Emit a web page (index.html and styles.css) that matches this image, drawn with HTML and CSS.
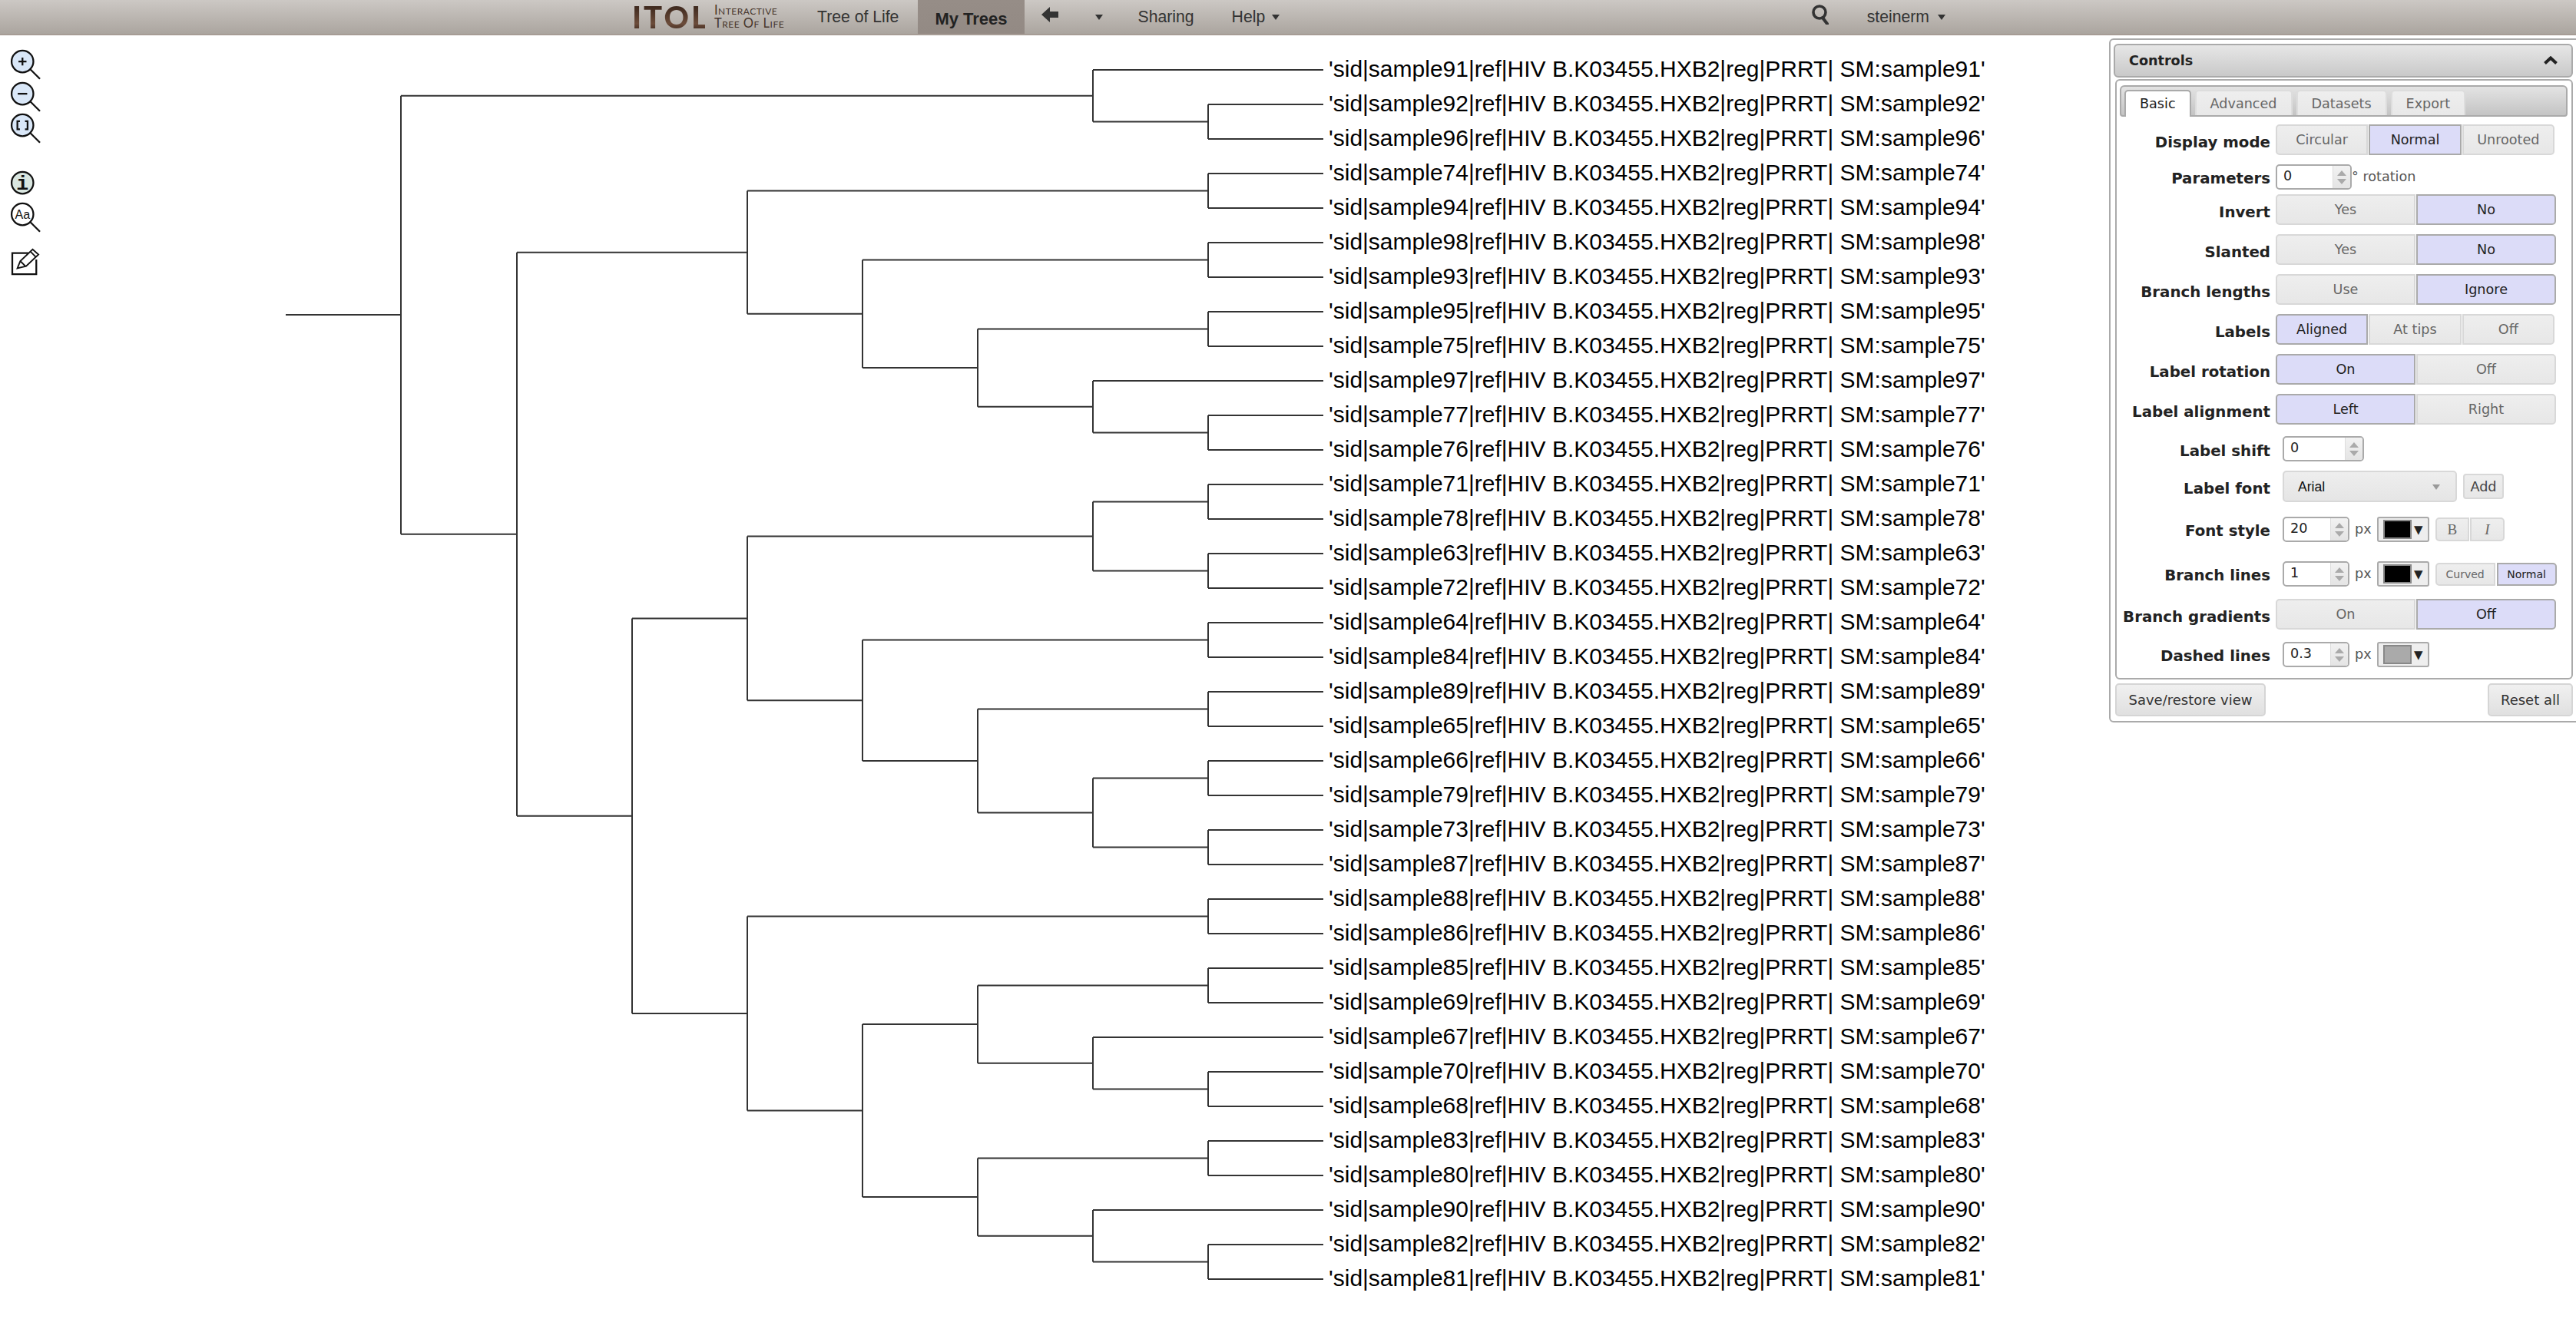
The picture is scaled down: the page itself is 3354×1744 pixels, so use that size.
FILE: index.html
```html
<!doctype html>
<html>
<head>
    <meta charset="UTF-8">
    <title>iTOL</title>
    <link rel="stylesheet" href="styles.css">
</head>
<body>
    <header class="topbar">
        <a class="logo">
            <span class="logo-mark">ITOL</span>
            <span class="logo-text">Interactive<br>Tree Of Life</span>
        </a>
        <a class="nav-item">Tree of Life</a>
        <a class="nav-item active">My Trees</a>
        <a class="nav-item nav-back">
            <svg width="22" height="20" viewBox="0 0 22 20"><path d="M0 10 L11 0 V6 H22 V14 H11 V20 Z" fill="#333"/></svg>
        </a>
        <a class="nav-item nav-drop"><span class="caret"></span></a>
        <a class="nav-item">Sharing</a>
        <a class="nav-item nav-help">Help <span class="caret"></span></a>
        <div class="nav-right">
            <svg class="nav-search" width="22" height="26" viewBox="0 0 22 26"><circle cx="10" cy="10" r="8" fill="none" stroke="#333" stroke-width="3.6"/><path d="M14 17 L20 25" stroke="#333" stroke-width="4" stroke-linecap="round"/></svg>
            <a class="nav-user">steinerm <span class="caret"></span></a>
        </div>
    </header>

    <div class="tools">
        <svg class="tool" viewBox="0 0 44 44"><circle class="lens" cx="17" cy="17" r="15"/><path class="ln" d="M27.500 27.500 L41 41"/><path class="ln" d="M11.500 17 H22.500 M17 11.500 V22.500"/></svg>
        <svg class="tool" viewBox="0 0 44 44"><circle class="lens" cx="17" cy="17" r="15"/><path class="ln" d="M27.500 27.500 L41 41"/><path class="ln" d="M10.500 17 H23.500"/></svg>
        <svg class="tool" viewBox="0 0 44 44"><circle class="lens" cx="17" cy="17" r="15"/><path class="ln" d="M27.500 27.500 L41 41"/><path class="ln" d="M13.500 11.500 H10 V22.500 H13.500 M20.500 11.500 H24 V22.500 H20.500"/></svg>
        <svg class="tool tool-gap" viewBox="0 0 44 44"><circle class="lens lens-info" cx="17" cy="17" r="15"/><text class="tool-i" x="17" y="26" text-anchor="middle">i</text></svg>
        <svg class="tool" viewBox="0 0 44 44"><circle class="lens lens-plain" cx="17" cy="17" r="15"/><path class="ln" d="M27.500 27.500 L41 41"/><text class="tool-aa" x="17" y="23" text-anchor="middle">Aa</text></svg>
        <svg class="tool tool-edit" viewBox="0 0 44 44"><path class="ln" d="M25 8 H3 V37 H36 V17"/><path class="ln thin" d="M10 29 L14 19 L31 3 L39 10 L22 26 Z M14 19 L21 26 M28 6 L35 13"/></svg>
    </div>

    <svg class="tree" width="2740" height="1698" viewBox="0 46 2740 1698">
        <path class="branches" d="
            M372 410 H522 M522 124.750 V695.700
            M522 124.750 H1423 M1423 91 V158.500 M1423 91 H1723
            M1423 158.500 H1573 M1573 136 V181 M1573 136 H1723 M1573 181 H1723
            M522 695.700 H673 M673 328.650 V1062.700
            M673 328.650 H973 M973 248.500 V408.800
            M973 248.500 H1573 M1573 226 V271 M1573 226 H1723 M1573 271 H1723
            M973 408.800 H1123 M1123 338.500 V479.100
            M1123 338.500 H1573 M1573 316 V361 M1573 316 H1723 M1573 361 H1723
            M1123 479.100 H1273 M1273 428.500 V529.750
            M1273 428.500 H1573 M1573 406 V451 M1573 406 H1723 M1573 451 H1723
            M1273 529.750 H1423 M1423 496 V563.500 M1423 496 H1723
            M1423 563.500 H1573 M1573 541 V586 M1573 541 H1723 M1573 586 H1723
            M673 1062.700 H823 M823 805.400 V1320
            M823 805.400 H973 M973 698.500 V912.250
            M973 698.500 H1423 M1423 653.500 V743.500
            M1423 653.500 H1573 M1573 631 V676 M1573 631 H1723 M1573 676 H1723
            M1423 743.500 H1573 M1573 721 V766 M1573 721 H1723 M1573 766 H1723
            M973 912.250 H1123 M1123 833.500 V991
            M1123 833.500 H1573 M1573 811 V856 M1573 811 H1723 M1573 856 H1723
            M1123 991 H1273 M1273 923.500 V1058.500
            M1273 923.500 H1573 M1573 901 V946 M1573 901 H1723 M1573 946 H1723
            M1273 1058.500 H1423 M1423 1013.500 V1103.500
            M1423 1013.500 H1573 M1573 991 V1036 M1573 991 H1723 M1573 1036 H1723
            M1423 1103.500 H1573 M1573 1081 V1126 M1573 1081 H1723 M1573 1126 H1723
            M823 1320 H973 M973 1193.500 V1446.600
            M973 1193.500 H1573 M1573 1171 V1216 M1573 1171 H1723 M1573 1216 H1723
            M973 1446.600 H1123 M1123 1334.100 V1559.100
            M1123 1334.100 H1273 M1273 1283.500 V1384.750
            M1273 1283.500 H1573 M1573 1261 V1306 M1573 1261 H1723 M1573 1306 H1723
            M1273 1384.750 H1423 M1423 1351 V1418.500 M1423 1351 H1723
            M1423 1418.500 H1573 M1573 1396 V1441 M1573 1396 H1723 M1573 1441 H1723
            M1123 1559.100 H1273 M1273 1508.500 V1609.750
            M1273 1508.500 H1573 M1573 1486 V1531 M1573 1486 H1723 M1573 1531 H1723
            M1273 1609.750 H1423 M1423 1576 V1643.500 M1423 1576 H1723
            M1423 1643.500 H1573 M1573 1621 V1666 M1573 1621 H1723 M1573 1666 H1723"/>
        <g class="leaves">
            <text x="1730" y="100">'sid|sample91|ref|HIV B.K03455.HXB2|reg|PRRT| SM:sample91'</text>
            <text x="1730" y="145">'sid|sample92|ref|HIV B.K03455.HXB2|reg|PRRT| SM:sample92'</text>
            <text x="1730" y="190">'sid|sample96|ref|HIV B.K03455.HXB2|reg|PRRT| SM:sample96'</text>
            <text x="1730" y="235">'sid|sample74|ref|HIV B.K03455.HXB2|reg|PRRT| SM:sample74'</text>
            <text x="1730" y="280">'sid|sample94|ref|HIV B.K03455.HXB2|reg|PRRT| SM:sample94'</text>
            <text x="1730" y="325">'sid|sample98|ref|HIV B.K03455.HXB2|reg|PRRT| SM:sample98'</text>
            <text x="1730" y="370">'sid|sample93|ref|HIV B.K03455.HXB2|reg|PRRT| SM:sample93'</text>
            <text x="1730" y="415">'sid|sample95|ref|HIV B.K03455.HXB2|reg|PRRT| SM:sample95'</text>
            <text x="1730" y="460">'sid|sample75|ref|HIV B.K03455.HXB2|reg|PRRT| SM:sample75'</text>
            <text x="1730" y="505">'sid|sample97|ref|HIV B.K03455.HXB2|reg|PRRT| SM:sample97'</text>
            <text x="1730" y="550">'sid|sample77|ref|HIV B.K03455.HXB2|reg|PRRT| SM:sample77'</text>
            <text x="1730" y="595">'sid|sample76|ref|HIV B.K03455.HXB2|reg|PRRT| SM:sample76'</text>
            <text x="1730" y="640">'sid|sample71|ref|HIV B.K03455.HXB2|reg|PRRT| SM:sample71'</text>
            <text x="1730" y="685">'sid|sample78|ref|HIV B.K03455.HXB2|reg|PRRT| SM:sample78'</text>
            <text x="1730" y="730">'sid|sample63|ref|HIV B.K03455.HXB2|reg|PRRT| SM:sample63'</text>
            <text x="1730" y="775">'sid|sample72|ref|HIV B.K03455.HXB2|reg|PRRT| SM:sample72'</text>
            <text x="1730" y="820">'sid|sample64|ref|HIV B.K03455.HXB2|reg|PRRT| SM:sample64'</text>
            <text x="1730" y="865">'sid|sample84|ref|HIV B.K03455.HXB2|reg|PRRT| SM:sample84'</text>
            <text x="1730" y="910">'sid|sample89|ref|HIV B.K03455.HXB2|reg|PRRT| SM:sample89'</text>
            <text x="1730" y="955">'sid|sample65|ref|HIV B.K03455.HXB2|reg|PRRT| SM:sample65'</text>
            <text x="1730" y="1000">'sid|sample66|ref|HIV B.K03455.HXB2|reg|PRRT| SM:sample66'</text>
            <text x="1730" y="1045">'sid|sample79|ref|HIV B.K03455.HXB2|reg|PRRT| SM:sample79'</text>
            <text x="1730" y="1090">'sid|sample73|ref|HIV B.K03455.HXB2|reg|PRRT| SM:sample73'</text>
            <text x="1730" y="1135">'sid|sample87|ref|HIV B.K03455.HXB2|reg|PRRT| SM:sample87'</text>
            <text x="1730" y="1180">'sid|sample88|ref|HIV B.K03455.HXB2|reg|PRRT| SM:sample88'</text>
            <text x="1730" y="1225">'sid|sample86|ref|HIV B.K03455.HXB2|reg|PRRT| SM:sample86'</text>
            <text x="1730" y="1270">'sid|sample85|ref|HIV B.K03455.HXB2|reg|PRRT| SM:sample85'</text>
            <text x="1730" y="1315">'sid|sample69|ref|HIV B.K03455.HXB2|reg|PRRT| SM:sample69'</text>
            <text x="1730" y="1360">'sid|sample67|ref|HIV B.K03455.HXB2|reg|PRRT| SM:sample67'</text>
            <text x="1730" y="1405">'sid|sample70|ref|HIV B.K03455.HXB2|reg|PRRT| SM:sample70'</text>
            <text x="1730" y="1450">'sid|sample68|ref|HIV B.K03455.HXB2|reg|PRRT| SM:sample68'</text>
            <text x="1730" y="1495">'sid|sample83|ref|HIV B.K03455.HXB2|reg|PRRT| SM:sample83'</text>
            <text x="1730" y="1540">'sid|sample80|ref|HIV B.K03455.HXB2|reg|PRRT| SM:sample80'</text>
            <text x="1730" y="1585">'sid|sample90|ref|HIV B.K03455.HXB2|reg|PRRT| SM:sample90'</text>
            <text x="1730" y="1630">'sid|sample82|ref|HIV B.K03455.HXB2|reg|PRRT| SM:sample82'</text>
            <text x="1730" y="1675">'sid|sample81|ref|HIV B.K03455.HXB2|reg|PRRT| SM:sample81'</text>
        </g>
    </svg>

    <aside class="controls">
        <div class="controls-head">
            <span>Controls</span>
            <svg width="18" height="12" viewBox="0 0 18 12"><path d="M1.500 9.500 L9 2.500 L16.500 9.500" fill="none" stroke="#222" stroke-width="4"/></svg>
        </div>
        <div class="controls-body">
            <div class="tabs">
                <span class="tab current">Basic</span>
                <span class="tab">Advanced</span>
                <span class="tab">Datasets</span>
                <span class="tab">Export</span>
            </div>

            <div class="row">
                <label>Display mode</label>
                <div class="seg seg-3"><span class="btn">Circular</span><span class="btn on">Normal</span><span class="btn">Unrooted</span></div>
            </div>
            <div class="row">
                <label class="label-up">Parameters</label>
                <div class="spin spin-first"><span class="val">0</span><span class="arrows"></span></div>
                <span class="unit unit-rot">° rotation</span>
            </div>
            <div class="row gap-6">
                <label>Invert</label>
                <div class="seg"><span class="btn">Yes</span><span class="btn on">No</span></div>
            </div>
            <div class="row">
                <label>Slanted</label>
                <div class="seg"><span class="btn">Yes</span><span class="btn on">No</span></div>
            </div>
            <div class="row">
                <label>Branch lengths</label>
                <div class="seg"><span class="btn">Use</span><span class="btn on">Ignore</span></div>
            </div>
            <div class="row">
                <label>Labels</label>
                <div class="seg seg-3"><span class="btn on">Aligned</span><span class="btn">At tips</span><span class="btn">Off</span></div>
            </div>
            <div class="row">
                <label>Label rotation</label>
                <div class="seg"><span class="btn on">On</span><span class="btn">Off</span></div>
            </div>
            <div class="row">
                <label>Label alignment</label>
                <div class="seg"><span class="btn on">Left</span><span class="btn">Right</span></div>
            </div>
            <div class="row gap-15">
                <label>Label shift</label>
                <div class="spin spin-wide"><span class="val">0</span><span class="arrows"></span></div>
            </div>
            <div class="row">
                <label>Label font</label>
                <div class="select"><span>Arial</span><span class="caret caret-grey"></span></div>
                <span class="btn btn-add">Add</span>
            </div>
            <div class="row gap-19">
                <label class="label-up">Font style</label>
                <div class="spin"><span class="val">20</span><span class="arrows"></span></div>
                <span class="unit">px</span>
                <div class="color"><span class="swatch"></span><span class="tri">▼</span></div>
                <div class="seg seg-mini"><span class="btn btn-serif">B</span><span class="btn btn-serif italic">I</span></div>
            </div>
            <div class="row gap-25">
                <label class="label-up">Branch lines</label>
                <div class="spin"><span class="val">1</span><span class="arrows"></span></div>
                <span class="unit">px</span>
                <div class="color"><span class="swatch"></span><span class="tri">▼</span></div>
                <div class="seg seg-small"><span class="btn">Curved</span><span class="btn on">Normal</span></div>
            </div>
            <div class="row gap-16">
                <label>Branch gradients</label>
                <div class="seg"><span class="btn">On</span><span class="btn on">Off</span></div>
            </div>
            <div class="row gap-16 row-last">
                <label class="label-up">Dashed lines</label>
                <div class="spin"><span class="val">0.3</span><span class="arrows"></span></div>
                <span class="unit">px</span>
                <div class="color"><span class="swatch swatch-grey"></span><span class="tri">▼</span></div>
            </div>
        </div>
        <div class="controls-foot">
            <span class="foot-btn foot-save">Save/restore view</span>
            <span class="foot-btn foot-reset">Reset all</span>
        </div>
    </aside>
</body>
</html>
```

FILE: styles.css
```css
* {
    box-sizing: border-box;
}
body {
    margin: 0;
    width: 3354px;
    height: 1744px;
    overflow: hidden;
    position: relative;
    background-color: #fff;
    font-family: "Liberation Sans", Arial, sans-serif;
}

/* top bar */
.topbar {
    height: 46px;
    padding: 0 821px 0 823px;
    display: flex;
    align-items: center;
    background: linear-gradient(#ccc8c4, #aba59f);
    border-bottom: 2px solid #a69c95;
    color: #333;
    font-size: 21.200px;
}
.logo {
    width: 219px;
    display: flex;
    align-items: center;
    gap: 12px;
}
.logo-mark {
    width: 95px;
    font-family: "Lato", sans-serif;
    font-weight: 900;
    font-size: 40px;
    line-height: 44px;
    letter-spacing: 3px;
    background: linear-gradient(#2d1c14, #6c4c3a 70%, #2d1c14);
    -webkit-background-clip: text;
    background-clip: text;
    color: transparent;
}
.logo-text {
    font-family: "Lato", sans-serif;
    font-variant: small-caps;
    font-size: 16.500px;
    line-height: 17px;
    letter-spacing: 0.5px;
    color: #47362c;
    white-space: nowrap;
}
.nav-item {
    height: 44px;
    padding: 0 22px;
    display: flex;
    align-items: center;
    white-space: nowrap;
}
.nav-item.active {
    margin-left: 3px;
    padding-top: 5px;
    background: linear-gradient(#968d87, #938a84);
    font-size: 22px;
    font-weight: bold;
    color: #222;
}
.nav-drop {
    padding: 0 24px 0 26px;
}
.nav-back svg {
    margin-bottom: 6px;
}
.nav-help {
    margin-left: 5px;
    gap: 9px;
}
.caret {
    display: inline-block;
    border-top: 7px solid #333;
    border-left: 5.500px solid transparent;
    border-right: 5.500px solid transparent;
}
.nav-right {
    margin-left: auto;
    display: flex;
    align-items: center;
    gap: 50px;
}
.nav-search {
    margin-bottom: 6px;
}
.nav-user {
    display: flex;
    align-items: center;
    gap: 11px;
}

/* zoom and label tools over the canvas */
.tools {
    position: absolute;
    left: 12px;
    top: 64px;
    display: flex;
    flex-direction: column;
}
.tool {
    width: 44px;
    height: 41.670px;
    overflow: visible;
}
.tool-gap {
    margin-top: 32.600px;
}
.tool-edit {
    margin-top: 17px;
}
.lens {
    fill: #d9e7f8;
    stroke: #111;
    stroke-width: 2.400;
}
.lens-info {
    fill: #d9e6e0;
}
.lens-plain {
    fill: #fff;
}
.ln {
    fill: none;
    stroke: #111;
    stroke-width: 2.400;
}
.thin {
    stroke-width: 2;
}
.tool-i {
    font-family: "Liberation Mono", monospace;
    font-weight: bold;
    font-size: 28px;
    fill: #111;
}
.tool-aa {
    font-size: 17px;
    fill: #111;
}

/* the tree */
.tree {
    display: block;
}
.branches {
    fill: none;
    stroke: #333;
    stroke-width: 2;
}
.leaves text {
    font-size: 30px;
    fill: #000;
}

/* controls window */
.controls {
    position: absolute;
    left: 2746px;
    top: 50px;
    width: 616px;
    height: 891px;
    padding: 5px 10px 0 4px;
    background-color: #fff;
    border: 2px solid #aaa;
    border-radius: 6px;
    font-family: "DejaVu Sans", Verdana, sans-serif;
    font-size: 17.600px;
    color: #222;
}
.controls-head {
    height: 44px;
    padding: 0 18px 0 18px;
    display: flex;
    align-items: center;
    justify-content: space-between;
    font-weight: bold;
    background: linear-gradient(#e6e6e6, #c9c9c9);
    border: 2px solid #aaa;
    border-radius: 6px;
}
.controls-body {
    margin: 2px 0 0 2px;
    height: 782px;
    border: 2px solid #aaa;
    border-radius: 6px;
    padding: 6px 5px 0 4px;
}
.tabs {
    height: 41px;
    padding: 6px 0 0 4px;
    display: flex;
    gap: 5px;
    align-items: flex-end;
    background: linear-gradient(#e3e3e3, #c4c4c4);
    border: 2px solid #aaa;
    border-radius: 6px 6px 4px 4px;
}
.tab {
    height: 33px;
    padding: 6px 18px 0;
    color: #666;
    background: linear-gradient(#eee, #e8e8e8);
    border: 2px solid #ddd;
    border-bottom: none;
    border-radius: 5px 5px 0 0;
}
.tab.current {
    height: 35px;
    margin-bottom: -2px;
    color: #222;
    background: #fff;
    border-color: #aaa;
}
.row {
    margin-top: 12px;
    margin-left: -4px;
    display: flex;
    align-items: center;
}
.tabs + .row {
    margin-top: 10px;
}
.gap-6 {
    margin-top: 6px;
}
.gap-15 {
    margin-top: 15px;
}
.gap-16 {
    margin-top: 16px;
}
.gap-19 {
    margin-top: 19px;
}
.gap-25 {
    margin-top: 25px;
}
.row label {
    width: 200px;
    flex: none;
    margin-right: 7px;
    padding-top: 6px;
    text-align: right;
    font-size: 19.800px;
    font-weight: bold;
    white-space: nowrap;
}
.row .label-up {
    padding-top: 4px;
}
.seg {
    width: 365px;
    height: 40px;
    display: flex;
    gap: 1px;
}
.seg-3 {
    width: 363px;
}
.btn {
    flex: 1;
    display: flex;
    align-items: center;
    justify-content: center;
    color: #666;
    background: linear-gradient(#eee, #e7e7e7);
    border: 2px solid #d8d8d8;
}
.btn:first-child {
    border-radius: 5px 0 0 5px;
}
.btn:last-child {
    border-radius: 0 5px 5px 0;
}
.btn.on {
    color: #222;
    background: #dcdcf8;
    border-color: #aaa;
}
.spin {
    width: 87px;
    height: 33px;
    margin-left: 9px;
    display: flex;
    justify-content: space-between;
    background-color: #fff;
    border: 2px solid #aaa;
    border-radius: 5px;
}
.spin-first {
    width: 99px;
    margin-left: 0;
}
.spin-wide {
    width: 106px;
}
.val {
    padding: 3px 0 0 8px;
}
.arrows {
    width: 23px;
    position: relative;
    background: linear-gradient(#f2f2f2, #e4e4e4);
    border-left: 1px solid #ddd;
    border-radius: 0 3px 3px 0;
}
.arrows::before,
.arrows::after {
    content: "";
    position: absolute;
    left: 5px;
    border-left: 6px solid transparent;
    border-right: 6px solid transparent;
}
.arrows::before {
    top: 6px;
    border-bottom: 7px solid #aaa;
}
.arrows::after {
    bottom: 5px;
    border-top: 7px solid #aaa;
}
.unit {
    margin: 0 7px;
    color: #555;
    padding-bottom: 1px;
}
.unit-rot {
    margin: 0;
    white-space: nowrap;
}
.select {
    width: 227px;
    height: 41px;
    margin-left: 9px;
    padding: 2px 18px 0;
    display: flex;
    align-items: center;
    justify-content: space-between;
    font-family: "Liberation Sans", Arial, sans-serif;
    color: #111;
    background: linear-gradient(#eee, #e5e5e5);
    border: 2px solid #d8d8d8;
    border-radius: 5px;
}
.caret-grey {
    border-top-color: #999;
    margin-right: 2px;
}
.btn.btn-add {
    flex: none;
    width: 53px;
    height: 33px;
    margin-left: 8px;
    color: #444;
    border-radius: 4px;
}
.color {
    width: 68px;
    height: 33px;
    padding: 4px 6px;
    display: flex;
    align-items: center;
    justify-content: space-between;
    background-color: #eee;
    border: 2px solid #aaa;
    border-radius: 3px;
}
.swatch {
    width: 37px;
    height: 25px;
    background-color: #000;
    border: 2px solid #888;
}
.swatch-grey {
    background-color: #aaa;
}
.tri {
    font-size: 15px;
    color: #222;
}
.seg-mini {
    width: 90px;
    height: 31px;
    margin-left: 8px;
}
.btn-serif {
    font-family: "Liberation Serif", serif;
    font-size: 19px;
}
.italic {
    font-style: italic;
}
.seg-small {
    width: 158px;
    height: 30px;
    margin-left: 8px;
    gap: 2px;
}
.seg-small .btn {
    font-size: 14px;
}
.controls-foot {
    margin: 5px 0 0 2px;
    display: flex;
    justify-content: space-between;
    font-size: 18px;
}
.foot-btn {
    height: 43px;
    display: flex;
    align-items: center;
    justify-content: center;
    color: #333;
    background: linear-gradient(#f0f0f0, #e0e0e0);
    border: 2px solid #d5d5d5;
    border-radius: 5px;
}
.foot-save {
    width: 196px;
}
.foot-reset {
    width: 111px;
}
```
